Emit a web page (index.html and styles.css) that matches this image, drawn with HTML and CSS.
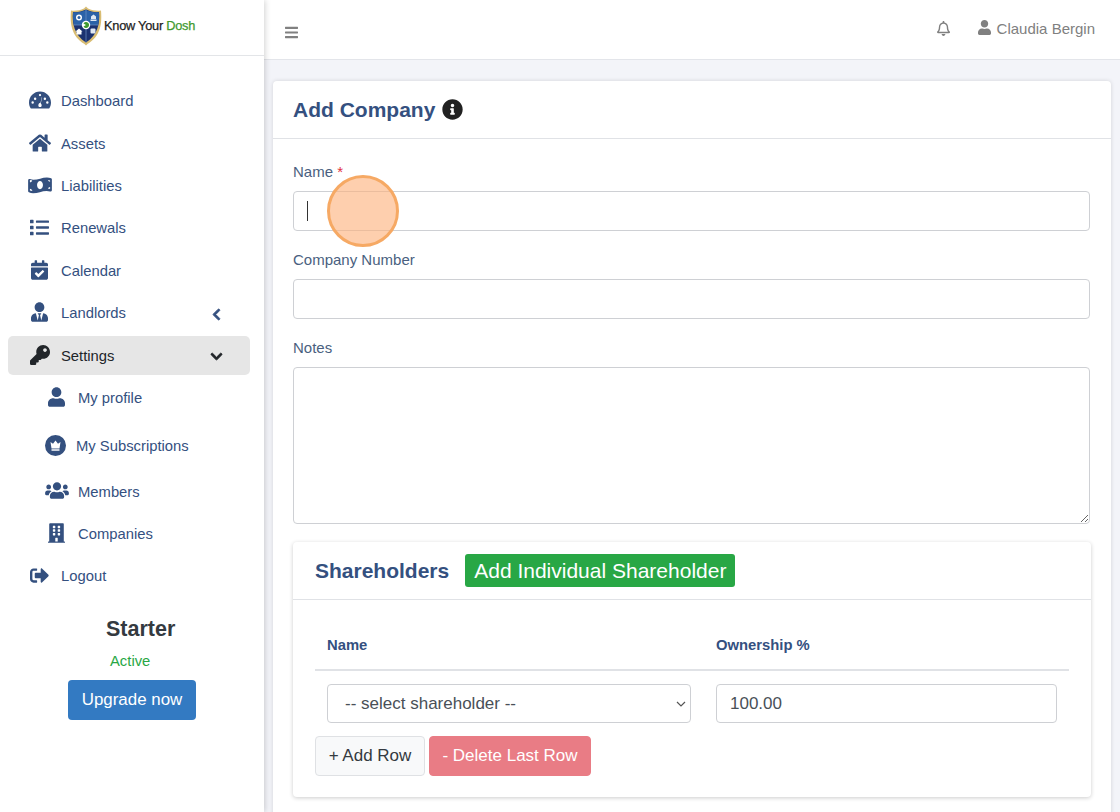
FILE: index.html
```html
<!DOCTYPE html>
<html lang="en">
<head>
<meta charset="utf-8">
<title>Add Company</title>
<link rel="stylesheet" href="styles.css">
</head>
<body>
<div class="app">
  <aside class="sidebar">
    <div class="brand">
      <svg class="shield" viewBox="0 0 32 40" aria-hidden="true">
        <path d="M16 .5 L18 2.5 C22 4.5 27 5 31 4.5 C32 17 31 30 17.5 38 L16 39.5 L14.500 38 C1 30 0 17 1 4.500 C5 5 10 4.500 14 2.500 Z" fill="#d9bd73"/>
        <path d="M16 3.500 C20 5.500 25 6.500 29 6 C30 17 28 29 16 36.500 C4 29 2 17 3 6 C7 6.500 12 5.500 16 3.500 Z" fill="#1c3270"/>
        <path d="M16 4 C20 5.800 25 6.700 29 6.200 C29.300 11 29 15 28 19 L4 19 C3 15 2.700 11 3 6.200 C7 6.700 12 5.800 16 4 Z" fill="#2b62a8"/>
        <path d="M16 3.500 V36.500 M3.500 19 H28.500" stroke="#6f93c4" stroke-width=".7"/>
        <circle cx="16" cy="19" r="4.200" fill="#fff"/>
        <path d="M13.500 17.500a3 3 0 1 1 0 3l2.500-1.500z" fill="#3f9a2f"/>
        <circle cx="9" cy="11.500" r="3" fill="#fff"/><circle cx="9" cy="11.500" r="1.500" fill="#2b62a8"/>
        <path d="M20.500 13.500h6v1.500h-6zM21 10.500l2.500-2 2.500 2v2.500h-5z" fill="#dfe8f4"/>
        <path d="M5.500 25.500l3.500-3 3.500 3h-1v3h-5v-3z" fill="#fff"/>
        <rect x="20.500" y="22.500" width="5" height="5" rx="1" fill="#dfe8f4"/>
      </svg>
      <span class="brand-name">Know Your <span class="brand-accent">Dosh</span></span>
    </div>
    <nav class="nav">
      <a class="nav-item"><span class="nav-icon"><svg class="ico w22" viewBox="0 0 576 512"><path fill-rule="evenodd" d="M288 32C129 32 0 161 0 320c0 53 14 102 39 145 6 10 16 15 27 15h444c11 0 21-5 27-15 25-43 39-92 39-145C576 161 447 32 288 32zM288 96a30 30 0 1 1 0 60 30 30 0 0 1 0-60zM96 288a32 32 0 1 1 0 64 32 32 0 0 1 0-64zM160 190a32 32 0 1 1 0 64 32 32 0 0 1 0-64zM480 288a32 32 0 1 1 0 64 32 32 0 0 1 0-64zM416 190a32 32 0 1 1 0 64 32 32 0 0 1 0-64zM340 190l-31 160c14 12 23 28 23 46 0 18-7 34-18 46h-52c-11-12-18-28-18-46 0-34 25-62 58-67l31-146z"/></svg></span><span>Dashboard</span></a>
      <a class="nav-item"><span class="nav-icon"><svg class="ico w22" viewBox="0 0 576 512"><path d="M280.370 148.260L96 300.110V464a16 16 0 0 0 16 16l112.060-.29a16 16 0 0 0 15.920-16V368a16 16 0 0 1 16-16h64a16 16 0 0 1 16 16v95.640a16 16 0 0 0 16 16.050L464 480a16 16 0 0 0 16-16V300L295.670 148.260a12.190 12.190 0 0 0-15.300 0zM571.600 251.470L488 182.560V44.050a12 12 0 0 0-12-12h-56a12 12 0 0 0-12 12v72.610L318.470 43a48 48 0 0 0-61 0L4.340 251.470a12 12 0 0 0-1.600 16.900l25.500 31A12 12 0 0 0 45.150 301l235.220-193.740a12.190 12.190 0 0 1 15.300 0L530.900 301a12 12 0 0 0 16.900-1.600l25.500-31a12 12 0 0 0-1.700-16.930z"/></svg></span><span>Assets</span></a>
      <a class="nav-item"><span class="nav-icon"><svg class="ico w24" viewBox="0 0 640 512"><path fill-rule="evenodd" d="M621 89c-38-16-77-25-115-25C385 64 264 125 142 125c-31 0-61-4-92-15C30 103 0 116 0 146v293c0 12 7 23 19 28 38 16 77 25 115 25 121 0 242-61 364-61 31 0 61 4 92 15 20 7 50-6 50-36V117c0-12-7-23-19-28zM48 132c20 5 41 8 62 9-2 31-29 55-62 55zM48 417v-46c34 0 62 27 64 60-23-1-44-6-64-14zM320 384c-44 0-80-50-80-112s36-112 80-112 80 50 80 112-36 112-80 112zM592 380c-18-5-37-8-56-9 3-27 26-49 56-51zM592 180c-27-2-49-21-54-47 19 2 37 6 54 12z"/></svg></span><span>Liabilities</span></a>
      <a class="nav-item"><span class="nav-icon"><svg class="ico w19" viewBox="0 0 512 512"><path d="M80 368H16a16 16 0 0 0-16 16v64a16 16 0 0 0 16 16h64a16 16 0 0 0 16-16v-64a16 16 0 0 0-16-16zm0-320H16A16 16 0 0 0 0 64v64a16 16 0 0 0 16 16h64a16 16 0 0 0 16-16V64a16 16 0 0 0-16-16zm0 160H16a16 16 0 0 0-16 16v64a16 16 0 0 0 16 16h64a16 16 0 0 0 16-16v-64a16 16 0 0 0-16-16zm416 176H176a16 16 0 0 0-16 16v32a16 16 0 0 0 16 16h320a16 16 0 0 0 16-16v-32a16 16 0 0 0-16-16zm0-320H176a16 16 0 0 0-16 16v32a16 16 0 0 0 16 16h320a16 16 0 0 0 16-16V80a16 16 0 0 0-16-16zm0 160H176a16 16 0 0 0-16 16v32a16 16 0 0 0 16 16h320a16 16 0 0 0 16-16v-32a16 16 0 0 0-16-16z"/></svg></span><span>Renewals</span></a>
      <a class="nav-item"><span class="nav-icon"><svg class="ico w17" viewBox="0 0 448 512"><path d="M436 160H12c-6.627 0-12-5.373-12-12v-36c0-26.510 21.490-48 48-48h48V12c0-6.627 5.373-12 12-12h40c6.627 0 12 5.373 12 12v52h128V12c0-6.627 5.373-12 12-12h40c6.627 0 12 5.373 12 12v52h48c26.510 0 48 21.490 48 48v36c0 6.627-5.373 12-12 12zM12 192h424c6.627 0 12 5.373 12 12v260c0 26.510-21.490 48-48 48H48c-26.510 0-48-21.490-48-48V204c0-6.627 5.373-12 12-12zm333.296 95.947l-28.169-28.398c-4.667-4.705-12.265-4.736-16.970-.068L194.120 364.665l-45.980-46.352c-4.667-4.705-12.266-4.736-16.971-.068l-28.397 28.170c-4.705 4.667-4.736 12.265-.068 16.970l82.601 83.269c4.667 4.705 12.265 4.736 16.970.068l142.953-141.805c4.705-4.667 4.736-12.265.068-16.970z"/></svg></span><span>Calendar</span></a>
      <a class="nav-item has-caret"><span class="nav-icon"><svg class="ico w17" viewBox="0 0 448 512"><path d="M224 256c70.700 0 128-57.300 128-128S294.700 0 224 0 96 57.300 96 128s57.300 128 128 128zm95.800 32.600L272 480l-32-136 32-56h-96l32 56-32 136-47.800-191.400C56.900 292 0 350.300 0 422.400V464c0 26.500 21.500 48 48 48h352c26.500 0 48-21.500 48-48v-41.600c0-72.100-56.900-130.400-128.200-133.800z"/></svg></span><span>Landlords</span><svg class="caret caret-left" viewBox="0 0 320 512"><path d="M34.520 239.030L228.870 44.690c9.370-9.370 24.570-9.370 33.940 0l22.670 22.670c9.360 9.360 9.370 24.520.04 33.900L131.490 256l154.020 154.750c9.340 9.380 9.320 24.540-.04 33.900l-22.670 22.670c-9.370 9.370-24.570 9.370-33.940 0L34.520 272.970c-9.370-9.370-9.370-24.570 0-33.940z"/></svg></a>
      <a class="nav-item has-caret active"><span class="nav-icon"><svg class="ico w20" viewBox="0 0 512 512"><path d="M512 176.001C512 273.203 433.202 352 336 352c-11.220 0-22.190-1.062-32.827-3.069l-24.012 27.014A23.999 23.999 0 0 1 261.223 384H224v40c0 13.255-10.745 24-24 24h-40v40c0 13.255-10.745 24-24 24H24c-13.255 0-24-10.745-24-24v-78.059c0-6.365 2.529-12.470 7.029-16.971l161.802-161.802C163.108 213.814 160 195.271 160 176 160 78.798 238.797.001 335.999 0 433.488-.001 512 78.511 512 176.001zM336 128c0 26.510 21.490 48 48 48s48-21.490 48-48-21.490-48-48-48-48 21.490-48 48z"/></svg></span><span>Settings</span><svg class="caret caret-down" viewBox="0 0 448 512"><path d="M207.029 381.476L12.686 187.132c-9.373-9.373-9.373-24.569 0-33.941l22.667-22.667c9.357-9.357 24.522-9.375 33.901-.04L224 284.505l154.745-154.021c9.379-9.335 24.544-9.317 33.901.04l22.667 22.667c9.373 9.373 9.373 24.569 0 33.941L240.971 381.476c-9.373 9.372-24.569 9.372-33.942 0z"/></svg></a>
      <a class="nav-item sub"><span class="nav-icon"><svg class="ico w17" viewBox="0 0 448 512"><path d="M224 256c70.700 0 128-57.300 128-128S294.700 0 224 0 96 57.300 96 128s57.300 128 128 128zm89.600 32h-16.700c-22.200 10.200-46.900 16-72.900 16s-50.600-5.800-72.900-16h-16.700C60.200 288 0 348.200 0 422.400V464c0 26.500 21.500 48 48 48h352c26.500 0 48-21.500 48-48v-41.600c0-74.200-60.200-134.400-134.400-134.400z"/></svg></span><span>My profile</span></a>
      <a class="nav-item sub sub-tall"><span class="nav-icon"><svg class="ico w21" viewBox="0 0 21 21"><path fill-rule="evenodd" d="M10.500 0a10.500 10.500 0 1 0 0 21 10.500 10.500 0 0 0 0-21zM5.500 7l2.500 1.800L10.500 5.500 13 8.800 15.500 7l-1 6.500h-8zM6.500 14.300h8v1.500h-8z"/></svg></span><span>My Subscriptions</span></a>
      <a class="nav-item sub"><span class="nav-icon"><svg class="ico w24" viewBox="0 0 640 512"><path d="M96 224c35.300 0 64-28.700 64-64s-28.700-64-64-64-64 28.700-64 64 28.700 64 64 64zm448 0c35.300 0 64-28.700 64-64s-28.700-64-64-64-64 28.700-64 64 28.700 64 64 64zm32 32h-64c-17.600 0-33.500 7.100-45.100 18.600 40.300 22.100 68.900 62 75.100 109.400h66c17.700 0 32-14.300 32-32v-32c0-35.300-28.700-64-64-64zm-256 0c61.900 0 112-50.100 112-112S381.900 32 320 32 208 82.100 208 144s50.100 112 112 112zm76.800 32h-8.300c-20.800 10-43.900 16-68.500 16s-47.600-6-68.500-16h-8.300C179.600 288 128 339.600 128 403.200V432c0 26.500 21.500 48 48 48h288c26.500 0 48-21.500 48-48v-28.800c0-63.600-51.600-115.200-115.200-115.200zm-223.700-13.400C161.500 263.100 145.600 256 128 256H64c-35.300 0-64 28.700-64 64v32c0 17.700 14.300 32 32 32h65.900c6.300-47.400 34.900-87.300 75.200-109.400z"/></svg></span><span>Members</span></a>
      <a class="nav-item sub"><span class="nav-icon"><svg class="ico w17" viewBox="0 0 448 512"><path d="M436 480h-20V24c0-13.255-10.745-24-24-24H56C42.745 0 32 10.745 32 24v456H12c-6.627 0-12 5.373-12 12v20h448v-20c0-6.627-5.373-12-12-12zM128 76c0-6.627 5.373-12 12-12h40c6.627 0 12 5.373 12 12v40c0 6.627-5.373 12-12 12h-40c-6.627 0-12-5.373-12-12V76zm0 96c0-6.627 5.373-12 12-12h40c6.627 0 12 5.373 12 12v40c0 6.627-5.373 12-12 12h-40c-6.627 0-12-5.373-12-12v-40zm52 148h-40c-6.627 0-12-5.373-12-12v-40c0-6.627 5.373-12 12-12h40c6.627 0 12 5.373 12 12v40c0 6.627-5.373 12-12 12zm76 160h-64v-84c0-6.627 5.373-12 12-12h40c6.627 0 12 5.373 12 12v84zm64-172c0 6.627-5.373 12-12 12h-40c-6.627 0-12-5.373-12-12v-40c0-6.627 5.373-12 12-12h40c6.627 0 12 5.373 12 12v40zm0-96c0 6.627-5.373 12-12 12h-40c-6.627 0-12-5.373-12-12v-40c0-6.627 5.373-12 12-12h40c6.627 0 12 5.373 12 12v40zm0-96c0 6.627-5.373 12-12 12h-40c-6.627 0-12-5.373-12-12V76c0-6.627 5.373-12 12-12h40c6.627 0 12 5.373 12 12v40z"/></svg></span><span>Companies</span></a>
      <a class="nav-item"><span class="nav-icon"><svg class="ico w19" viewBox="0 0 512 512"><path d="M497 273L329 441c-15 15-41 4.500-41-17v-96H152c-13.300 0-24-10.700-24-24v-96c0-13.300 10.700-24 24-24h136V88c0-21.400 25.900-32 41-17l168 168c9.300 9.400 9.300 24.600 0 34zM192 436v-40c0-6.600-5.400-12-12-12H96c-17.700 0-32-14.300-32-32V160c0-17.700 14.300-32 32-32h84c6.600 0 12-5.400 12-12V76c0-6.600-5.400-12-12-12H96c-53 0-96 43-96 96v192c0 53 43 96 96 96h84c6.600 0 12-5.400 12-12z"/></svg></span><span>Logout</span></a>
    </nav>
    <div class="plan">
      <h3 class="plan-name">Starter</h3>
      <div class="plan-status">Active</div>
      <a class="btn-upgrade">Upgrade now</a>
    </div>
  </aside>
  <main class="main">
    <header class="topbar">
      <svg class="hamburger" viewBox="0 0 448 512"><path d="M16 132h416c8.837 0 16-7.163 16-16V76c0-8.837-7.163-16-16-16H16C7.163 60 0 67.163 0 76v40c0 8.837 7.163 16 16 16zm0 160h416c8.837 0 16-7.163 16-16v-40c0-8.837-7.163-16-16-16H16c-8.837 0-16 7.163-16 16v40c0 8.837 7.163 16 16 16zm0 160h416c8.837 0 16-7.163 16-16v-40c0-8.837-7.163-16-16-16H16c-8.837 0-16 7.163-16 16v40c0 8.837 7.163 16 16 16z"/></svg>
      <div class="top-right">
        <svg class="bell" viewBox="0 0 448 512"><path d="M439.390 362.290c-19.320-20.760-55.470-51.990-55.470-154.290 0-77.700-54.480-139.900-127.940-155.160V32c0-17.670-14.320-32-31.980-32s-31.980 14.330-31.980 32v20.840C118.560 68.100 64.080 130.300 64.080 208c0 102.300-36.150 133.530-55.470 154.290-6 6.450-8.660 14.160-8.610 21.710.11 16.400 12.980 32 32.100 32h383.800c19.120 0 32-15.600 32.100-32 .05-7.550-2.610-15.270-8.610-21.710zM67.530 368c21.220-27.970 44.420-74.330 44.530-159.420 0-.2-.06-.38-.06-.58 0-61.860 50.140-112 112-112s112 50.140 112 112c0 .2-.06.380-.06.580.11 85.100 23.310 131.460 44.530 159.420H67.530zM224 512c35.320 0 63.970-28.650 63.970-64H160.030c0 35.350 28.650 64 63.970 64z"/></svg>
        <span class="user">
          <svg class="user-ico" viewBox="0 0 448 512"><path d="M224 256c70.700 0 128-57.300 128-128S294.700 0 224 0 96 57.300 96 128s57.300 128 128 128zm89.600 32h-16.700c-22.200 10.200-46.900 16-72.900 16s-50.600-5.800-72.900-16h-16.700C60.200 288 0 348.200 0 422.400V464c0 26.500 21.500 48 48 48h352c26.500 0 48-21.500 48-48v-41.600c0-74.200-60.200-134.400-134.400-134.400z"/></svg>
          <span>Claudia Bergin</span>
        </span>
      </div>
    </header>
    <div class="content">
      <section class="card">
        <div class="card-head">
          <h1 class="page-title">Add Company</h1>
          <svg class="info" viewBox="0 0 512 512"><path d="M256 8C119.043 8 8 119.083 8 256c0 136.997 111.043 248 248 248s248-111.003 248-248C504 119.083 392.957 8 256 8zm0 110c23.196 0 42 18.804 42 42s-18.804 42-42 42-42-18.804-42-42 18.804-42 42-42zm56 254c0 6.627-5.373 12-12 12h-88c-6.627 0-12-5.373-12-12v-24c0-6.627 5.373-12 12-12h12v-64h-12c-6.627 0-12-5.373-12-12v-24c0-6.627 5.373-12 12-12h64c6.627 0 12 5.373 12 12v100h12c6.627 0 12 5.373 12 12v24z"/></svg>
        </div>
        <div class="card-body">
          <div class="field">
            <label class="label">Name <span class="req">*</span></label>
            <div class="input-wrap"><input class="control" type="text"><span class="text-caret"></span></div>
          </div>
          <div class="field">
            <label class="label">Company Number</label>
            <input class="control" type="text">
          </div>
          <div class="field">
            <label class="label">Notes</label>
            <textarea class="control notes"></textarea>
          </div>
          <section class="subcard">
            <div class="subcard-head">
              <h2 class="sub-title">Shareholders</h2>
              <a class="btn-green">Add Individual Shareholder</a>
            </div>
            <div class="subcard-body">
              <table class="holders">
                <thead><tr><th>Name</th><th>Ownership %</th></tr></thead>
                <tbody><tr>
                  <td class="col-name"><select class="control select"><option>-- select shareholder --</option></select></td>
                  <td class="col-own"><input class="control own" type="text" value="100.00"></td>
                </tr></tbody>
              </table>
              <div class="row-actions">
                <button class="btn btn-light" type="button">+ Add Row</button>
                <button class="btn btn-danger" type="button">- Delete Last Row</button>
              </div>
            </div>
          </section>
        </div>
      </section>
    </div>
  </main>
</div>
<div class="click-dot"></div>
</body>
</html>
```
FILE: styles.css
```css
* { box-sizing: border-box; }
html, body { margin: 0; height: 812px; overflow: hidden; }
body { font-family: "Liberation Sans", Arial, sans-serif; color: #212529; background: #f3f4f9; }

.app { display: flex; height: 812px; }

/* Sidebar */
.sidebar { width: 264px; flex: none; height: 812px; background: #fff; box-shadow: 1px 0 6px rgba(0,0,0,.18); position: relative; z-index: 2; }
.brand { height: 56px; border-bottom: 1px solid #e3e5e8; display: flex; align-items: center; padding: 0 0 4px 70px; gap: 2px; }
.shield { width: 32px; height: 40px; flex: none; }
.brand-name { font-size: 12.8px; letter-spacing: -.25px; color: #222; -webkit-text-stroke: .25px #222; white-space: nowrap; }
.brand-accent { color: #3f9a2f; -webkit-text-stroke: .25px #3f9a2f; }

.nav { padding: 24px 14px 0 8px; display: flex; flex-direction: column; }
.nav-item { height: 42.4px; display: flex; align-items: center; padding-left: 20px; gap: 10px; font-size: 14.8px; color: #34507f; border-radius: 5px; }
.nav-icon { width: 23px; height: 24px; display: flex; align-items: center; justify-content: center; flex: none; transform: translateY(-1px); }
.ico { display: block; fill: currentColor; flex: none; }
.w17 { width: 17px; height: 20px; }
.w19 { width: 19px; height: 19px; }
.w20 { width: 20px; height: 20px; }
.w21 { width: 21px; height: 21px; }
.w22 { width: 22px; height: 20px; }
.w24 { width: 24px; height: 19px; }
.has-caret { padding-right: 27px; }
.caret { margin-left: auto; width: 11px; height: 13px; fill: currentColor; stroke: currentColor; stroke-width: 36px; flex: none; transform: translateY(1px); }
.caret-down { width: 13px; }
.caret-left { margin-right: 1px; }
.active { background: #e6e6e6; color: #212529; height: 39px; margin: 1.5px 0 2px; padding-top: 1px; }
.sub { padding-left: 37px; }
.sub-tall { height: 51.1px; padding-top: 3px; padding-left: 36px; gap: 9px; }

.plan { margin-top: 18px; display: flex; flex-direction: column; align-items: flex-start; }
.plan-name { margin: 0 0 0 106px; font-size: 21.5px; line-height: 26px; font-weight: 700; color: #343a40; }
.plan-status { margin: 10px 0 0 110px; font-size: 14.8px; line-height: 18px; color: #28a745; }
.btn-upgrade { margin: 10px 0 0 68px; width: 128px; height: 40px; background: #337ac2; color: #fff; border-radius: 4px; font-size: 16.9px; display: flex; align-items: center; justify-content: center; }

/* Main */
.main { flex: 1; min-width: 0; background: #f3f4f9; }
.topbar { height: 60px; background: #fff; border-bottom: 1px solid #e3e5ea; display: flex; align-items: center; justify-content: space-between; padding: 6px 25px 0 21px; }
.hamburger { width: 13px; height: 15px; fill: #808080; }
.top-right { display: flex; align-items: center; gap: 28px; transform: translateY(-4px); }
.bell { width: 13px; height: 15px; fill: #808080; }
.user { display: flex; align-items: center; gap: 6px; font-size: 15px; color: #808080; }
.user-ico { width: 13px; height: 15px; fill: #808080; transform: translateY(-1px); }

.content { padding: 21px 9px 0; }
.card { background: #fff; border-radius: 4px; box-shadow: 0 0 4px rgba(0,0,0,.14); }
.card-head { height: 58px; border-bottom: 1px solid #e0e2e6; display: flex; align-items: center; gap: 7px; padding: 0 20px; }
.page-title { margin: 0; font-size: 21px; line-height: 26px; font-weight: 700; color: #34507f; }
.info { width: 21px; height: 21px; fill: #212121; }
.card-body { padding: 22px 20px 40px; }
.label { display: block; font-size: 15px; line-height: 21px; height: 30px; color: #4a5f80; }
.req { color: #e0313f; }
.input-wrap { position: relative; }
.text-caret { position: absolute; left: 14px; top: 10px; width: 1px; height: 20px; background: #333; }
.control { display: block; width: 797px; height: 40px; background: #fff; border: 1px solid #ced0d4; border-radius: 4px; font: 17px "Liberation Sans", Arial, sans-serif; color: #495057; outline: 0; padding: 0 13px; margin-bottom: 18px; }
.notes { height: 157px; resize: vertical; }

.subcard { width: 798px; background: #fff; border-radius: 4px; box-shadow: 0 1px 4px rgba(0,0,0,.2); }
.subcard-head { height: 58px; border-bottom: 1px solid #e0e2e6; display: flex; align-items: center; padding: 0 22px; gap: 16px; }
.sub-title { margin: 0; font-size: 21px; line-height: 26px; font-weight: 700; color: #34507f; }
.btn-green { height: 33px; padding: 0 9px; background: #28a745; color: #fff; border-radius: 3px; font-size: 21px; display: flex; align-items: center; white-space: nowrap; }
.subcard-body { padding: 28px 22px 21px; }

.holders { width: 754px; table-layout: fixed; border-collapse: collapse; }
.holders th { height: 42px; padding: 0 12px 8px; text-align: left; font-size: 14.8px; font-weight: 700; color: #34507f; border-bottom: 2px solid #e0e2e6; }
.holders th:first-child { width: 389px; }
.holders td { padding: 13px 12px 13px; vertical-align: top; }
.holders .control { margin: 0; height: 39px; }
.select { width: 364px; appearance: none; -webkit-appearance: none; padding-left: 17px; background: #fff url("data:image/svg+xml,%3Csvg xmlns='http://www.w3.org/2000/svg' viewBox='0 0 10 6'%3E%3Cpath d='M1 1l4 4 4-4' fill='none' stroke='%23555' stroke-width='1.200'/%3E%3C/svg%3E") no-repeat right 4px center / 10px 6px; }
.own { width: 341px; }

.row-actions { display: flex; gap: 4px; }
.btn { height: 40px; border-radius: 4px; font: 17px "Liberation Sans", Arial, sans-serif; padding: 0; }
.btn-light { width: 110px; background: #f8f9fa; border: 1px solid #dfe1e4; color: #343a40; }
.btn-danger { width: 162px; background: #e97c85; border: 1px solid #e97c85; color: #fff; }

/* Click marker from the screen recording */
.click-dot { position: absolute; left: 327px; top: 175px; width: 72px; height: 72px; border-radius: 50%; background: rgba(253,178,124,.62); border: 3px solid #f6a964; z-index: 5; }
```
